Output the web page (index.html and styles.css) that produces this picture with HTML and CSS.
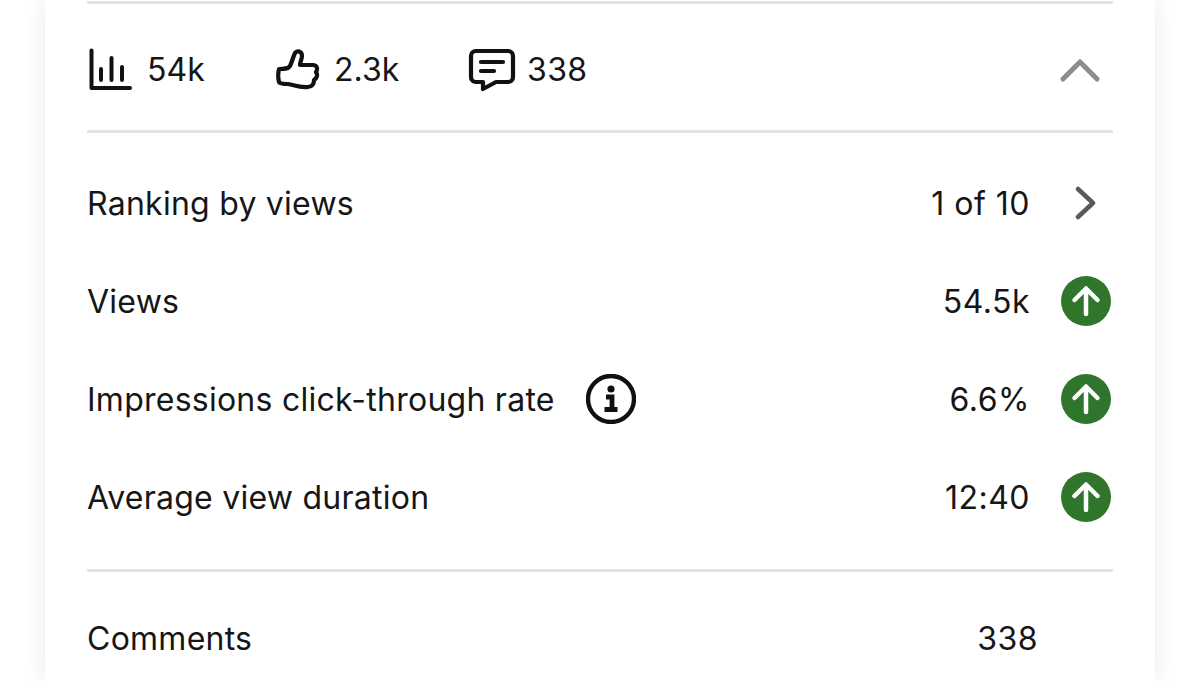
FILE: index.html
```html
<!DOCTYPE html>
<html lang="en">
<head>
  <meta charset="UTF-8">
  <title>Video analytics</title>
  <link rel="stylesheet" href="styles.css">
</head>
<body>
  <div class="card">
    <div class="summary">
      <div class="stat stat-views">
        <svg width="44" height="44" viewBox="0 0 44 44" fill="none" stroke="#111" stroke-width="4" stroke-linecap="round" stroke-linejoin="round">
          <path d="M2.500 2.500V40H41"/>
          <path d="M12 21V32M22.500 10V32M33 19V32"/>
        </svg>
        <span>54k</span>
      </div>
      <div class="stat stat-likes">
        <svg width="44" height="44" viewBox="0 0 44 44" fill="none" stroke="#111" stroke-width="4.200" stroke-linecap="round" stroke-linejoin="round">
          <path d="M3 21C8 21 12 21 14 18C16 14 17 9 19 5C21 2 26 3 26 8C26 11 24 14 24 17H37C41 17 42 21 40 24C42 27 41 30 38 32C38 36 36 39 32 39C24 40 18 37 12 36C8 36 4 36 3 34C2 30 2 25 3 21Z"/>
        </svg>
        <span>2.3k</span>
      </div>
      <div class="stat stat-comments">
        <svg width="48" height="44" viewBox="0 0 48 44" fill="none" stroke="#111" stroke-width="4.200" stroke-linecap="round" stroke-linejoin="round">
          <path d="M8 3H40C43 3 45 5 45 8V29C45 32 43 34 40 34H28L15 41V34H8C5 34 3 32 3 29V8C3 5 5 3 8 3Z"/>
          <path d="M13 14H35M13 23H26"/>
        </svg>
        <span>338</span>
      </div>
      <svg class="toggle" width="42" height="26" viewBox="0 0 42 26" fill="none" stroke="#8c8c8c" stroke-width="5" stroke-linecap="round" stroke-linejoin="round">
        <path d="M3 22L20 5L37 22"/>
      </svg>
    </div>

    <div class="metrics">
      <div class="row">
        <span class="label">Ranking by views</span>
        <span class="value">1 of 10</span>
        <div class="mark">
          <svg width="24" height="34" viewBox="0 0 24 34" fill="none" stroke="#5a5a5a" stroke-width="4.500" stroke-linecap="round" stroke-linejoin="round">
            <path d="M4 3L19 17L4 31"/>
          </svg>
        </div>
      </div>
      <div class="row">
        <span class="label">Views</span>
        <span class="value">54.5k</span>
        <div class="mark">
          <svg width="50" height="50" viewBox="0 0 50 50">
            <circle cx="25" cy="25" r="25" fill="#2f752b"/>
            <path d="M25 38V13M13.500 24L25 12.500L36.500 24" fill="none" stroke="#fff" stroke-width="4.500" stroke-linecap="round" stroke-linejoin="round"/>
          </svg>
        </div>
      </div>
      <div class="row">
        <span class="label">Impressions click-through rate</span>
        <svg class="info" width="50" height="50" viewBox="0 0 50 50" fill="none">
          <circle cx="25" cy="25" r="23" stroke="#111" stroke-width="4.400"/>
          <circle cx="25" cy="15" r="3.600" fill="#111"/>
          <path d="M20 23H26V35M18.500 35.500H31.500" stroke="#111" stroke-width="4.800"/>
        </svg>
        <span class="value">6.6%</span>
        <div class="mark">
          <svg width="50" height="50" viewBox="0 0 50 50">
            <circle cx="25" cy="25" r="25" fill="#2f752b"/>
            <path d="M25 38V13M13.500 24L25 12.500L36.500 24" fill="none" stroke="#fff" stroke-width="4.500" stroke-linecap="round" stroke-linejoin="round"/>
          </svg>
        </div>
      </div>
      <div class="row">
        <span class="label">Average view duration</span>
        <span class="value">12:40</span>
        <div class="mark">
          <svg width="50" height="50" viewBox="0 0 50 50">
            <circle cx="25" cy="25" r="25" fill="#2f752b"/>
            <path d="M25 38V13M13.500 24L25 12.500L36.500 24" fill="none" stroke="#fff" stroke-width="4.500" stroke-linecap="round" stroke-linejoin="round"/>
          </svg>
        </div>
      </div>
    </div>

    <div class="extra">
      <span class="label">Comments</span>
      <span class="value">338</span>
    </div>
  </div>
</body>
</html>
```

FILE: styles.css
```css
*{
  margin: 0;
  padding: 0;
  box-sizing: border-box;
}
html,body{
  height: 681px;
  overflow: hidden;
  background: #fff;
}
body{
  padding: 0 45px;
  font-family: "Inter", "Liberation Sans", sans-serif;
  font-size: 32px;
  color: #161616;
}
.card{
  height: 681px;
  padding: 1px 42px 0;
  background: #fff;
  box-shadow: 0 0 22px rgba(0,0,0,0.09);
}
.summary{
  height: 132px;
  display: flex;
  align-items: center;
  padding: 5px 0 0 2px;
  border-top: 3px solid #e4e4e4;
  border-bottom: 3px solid #e4e4e4;
}
.stat{
  display: flex;
  align-items: center;
  gap: 14px;
}
.stat-views{
  width: 187px;
}
.stat-likes{
  width: 192px;
}
.stat-comments{
  gap: 11px;
  letter-spacing: 0.4px;
}
.toggle{
  margin-left: auto;
  margin-right: 11px;
}
.metrics{
  height: 439px;
  padding-top: 21px;
  border-bottom: 3px solid #e4e4e4;
}
.row{
  height: 98px;
  display: flex;
  align-items: center;
}
.label{
  letter-spacing: 0.25px;
}
.info{
  margin-left: 31px;
}
.value{
  margin-left: auto;
  letter-spacing: 0.5px;
}
.mark{
  width: 50px;
  margin: 0 2px 0 31px;
  display: flex;
  justify-content: center;
}
.extra{
  height: 132px;
  display: flex;
  align-items: center;
  justify-content: space-between;
  padding-right: 75px;
}
```
